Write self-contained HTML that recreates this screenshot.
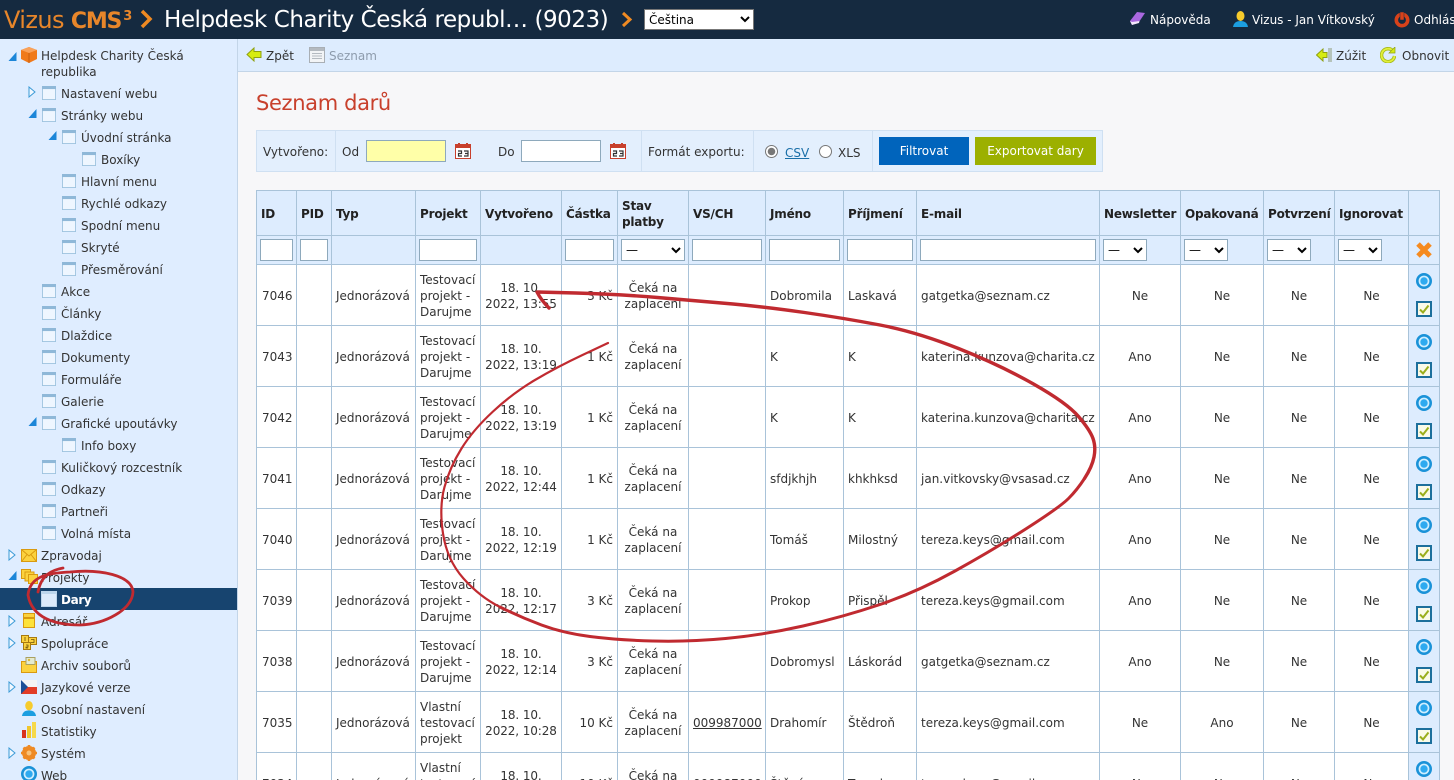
<!DOCTYPE html>
<html lang="cs"><head><meta charset="utf-8"><title>Seznam darů</title>
<style>
html,body{margin:0;padding:0;width:1454px;height:780px;overflow:hidden;background:#f7f7f9;font-family:"DejaVu Sans","Liberation Sans",sans-serif;font-size:12px;letter-spacing:0;color:#333}
*{box-sizing:border-box}
#wrap{position:absolute;left:0;top:0;width:1454px;height:780px;overflow:hidden;background:#f7f7f9}
.a{position:absolute;white-space:nowrap}
#top{position:absolute;left:0;top:0;width:1454px;height:39px;background:#152a40;overflow:hidden}
#side{position:absolute;left:0;top:39px;width:238px;height:741px;background:#dfedff;border-right:1px solid #c3d5e8;overflow:hidden}
#bar{position:absolute;left:238px;top:39px;width:1216px;height:33px;background:#ddecfe;border-bottom:1px solid #c3d5e8}
.t{position:absolute;white-space:nowrap;line-height:16px;height:16px}
svg.i{position:absolute;display:block}
#flt{position:absolute;left:256px;top:130px;width:847px;height:42px;background:#e3effd;border:1px solid #cfe0f2}
.sep{position:absolute;top:130px;width:1px;height:42px;background:#cfe0f2}
input.x{position:absolute;background:#fff;border:1px solid #8ea9bc;height:22px;padding:0;margin:0}
table{position:absolute;left:256px;top:190px;width:1183px;table-layout:fixed;border-collapse:collapse;background:#fff}
td,th{border:1px solid #a9c3d9;padding:0 4px;line-height:16px;font-size:12px;overflow:hidden;white-space:nowrap;vertical-align:middle}
th{background:#ddecfe;text-align:left;font-weight:bold;letter-spacing:-.2px;color:#222;height:45px;white-space:normal;padding-top:2px}
tr.f td{background:#ddecfe;height:29px;padding:0 3px}
tr.f input{display:block;width:100%;height:22px;border:1px solid #8ea9bc;background:#fff;padding:0;margin:0}
tr.f select{display:block;height:22px;border:1px solid #8ea9bc;background:#fff;font:12px "DejaVu Sans",sans-serif;margin:0;padding:0;width:100%}
tr.r td{height:61px;padding-top:2px}
tr.r td:first-child{padding-left:5px}
.c{text-align:center}.rr{text-align:right}
.w{white-space:normal}
td.n{white-space:nowrap;text-align:center;padding-left:0;padding-right:0;letter-spacing:-.1px}
tr.r td.n{padding-left:0;padding-right:0}
td.act{background:#ddecfe;padding:0;position:relative}
tr.r td.act{padding:0;background:#ddecfe}
td.act svg{display:block;margin:0 auto}
</style></head><body>
<svg width="0" height="0" style="position:absolute">
<defs>
<symbol id="pg" viewBox="0 0 16 16"><rect x=".5" y=".5" width="15" height="15" fill="#eef6ff" stroke="#9cc2de"/><rect x="0" y="0" width="16" height="3.500" fill="#8fb8d8"/></symbol>
<symbol id="op" viewBox="0 0 8 10"><path d="M8 0V9H0Z" fill="#1c86d8"/></symbol>
<symbol id="cl" viewBox="0 0 8 12"><path d="M1 1L7 6L1 11Z" fill="#f2f8ff" stroke="#3b9ad6"/></symbol>
<symbol id="cal" viewBox="0 0 16 16"><rect x=".5" y="1.500" width="15" height="14" fill="#fff" stroke="#c8402c"/><rect x="0" y="1" width="16" height="4" fill="#c8402c"/><rect x="3" y="0" width="2" height="3" fill="#c8402c"/><rect x="11" y="0" width="2" height="3" fill="#c8402c"/><path d="M3 8h3.500v2.500h-3v2.500h3.500M9 8h4v2.500h-3M13 10.500v2.500h-4" fill="none" stroke="#333" stroke-width="1.200"/></symbol>
<symbol id="web" viewBox="0 0 16 16"><circle cx="8" cy="8" r="6.700" fill="#cfeeff" stroke="#1a92d8" stroke-width="2.600"/><circle cx="8" cy="8" r="3.700" fill="#2eaaf0"/></symbol>
<symbol id="chk" viewBox="0 0 16 16"><rect x="1" y="1" width="14" height="14" fill="#fafae8" stroke="#1c6f9c" stroke-width="2"/><path d="M4 8.500L7 11.500L12.500 4.500" fill="none" stroke="#9aae1c" stroke-width="2"/></symbol>
</defs></svg>
<div id="wrap">
<div id="top">
<div class="a" style="left:4px;top:5px;font-size:24px;line-height:30px;color:#e8862a;letter-spacing:-.6px">Vizus <b style="font-size:22px;letter-spacing:-1.200px">CMS<sup style="font-size:13px;line-height:0;vertical-align:8px;letter-spacing:0;margin-left:2px">3</sup></b></div>
<svg class="i" style="left:139px;top:9px" width="14" height="20" viewBox="0 0 14 20"><path d="M3 2L11 10L3 18" fill="none" stroke="#ef8a22" stroke-width="3.500"/></svg>
<div class="a" style="left:164px;top:5px;font-size:23px;line-height:30px;color:#fff;letter-spacing:-.45px">Helpdesk Charity Česká republ… (9023)</div>
<svg class="i" style="left:620px;top:11px" width="13" height="17" viewBox="0 0 13 17"><path d="M3 2L10 8.500L3 15" fill="none" stroke="#ef8a22" stroke-width="3"/></svg>
<select style="position:absolute;left:644px;top:9px;width:110px;height:21px;font:12px 'DejaVu Sans',sans-serif;background:#fff;border:1px solid #777;padding:0"><option>Čeština</option></select>
<svg class="i" style="left:1129px;top:11px" width="17" height="16" viewBox="0 0 17 16"><path d="M1 10L8 1L16 2L10 11L3 14Z" fill="#a968e0"/><path d="M1 10L3 14L10 12L10.500 10L3 11Z" fill="#f3e8fb"/></svg>
<div class="t" style="left:1150px;top:12px;color:#fff">Nápověda</div>
<svg class="i" style="left:1232px;top:10px" width="17" height="18" viewBox="0 0 17 18"><ellipse cx="8.500" cy="6" rx="4" ry="5" fill="#f6cb2c"/><path d="M1 17Q2 11 8.500 11Q15 11 16 17Z" fill="#1c9ee0"/></svg>
<div class="t" style="left:1252px;top:12px;color:#fff">Vizus - Jan Vítkovský</div>
<svg class="i" style="left:1394px;top:11px" width="16" height="17" viewBox="0 0 16 17"><circle cx="8" cy="9" r="5.700" fill="none" stroke="#d8421a" stroke-width="3.600"/><rect x="6" y="1" width="4" height="8" fill="#d8421a" stroke="#152a40" stroke-width=".5"/></svg>
<div class="t" style="left:1414px;top:12px;color:#fff">Odhlásit</div>
</div>

<div id="side">
<svg class="i" style="left:8px;top:13px" width="9" height="10"><use href="#op"/></svg>
<svg class="i" style="left:21px;top:8px" width="16" height="16" viewBox="0 0 16 16"><path d="M8 0L16 3V12L8 16L0 12V3Z" fill="#f07a1a"/><path d="M0 3L8 6L16 3L8 0Z" fill="#f9a25a"/><path d="M8 6V16" stroke="#c95f0e"/></svg>
<div class="t" style="left:41px;top:9px">Helpdesk Charity Česká</div>
<div class="t" style="left:41px;top:25px">republika</div>

<svg class="i" style="left:28px;top:47px" width="8" height="12"><use href="#cl"/></svg><svg class="i" style="left:42px;top:47px" width="14" height="14"><use href="#pg"/></svg><div class="t" style="left:61px;top:47px">Nastavení webu</div>
<svg class="i" style="left:28px;top:70px" width="9" height="10"><use href="#op"/></svg><svg class="i" style="left:42px;top:69px" width="14" height="14"><use href="#pg"/></svg><div class="t" style="left:61px;top:69px">Stránky webu</div>
<svg class="i" style="left:48px;top:92px" width="9" height="10"><use href="#op"/></svg><svg class="i" style="left:62px;top:91px" width="14" height="14"><use href="#pg"/></svg><div class="t" style="left:81px;top:91px">Úvodní stránka</div>
<svg class="i" style="left:82px;top:113px" width="14" height="14"><use href="#pg"/></svg><div class="t" style="left:101px;top:113px">Boxíky</div>
<svg class="i" style="left:62px;top:135px" width="14" height="14"><use href="#pg"/></svg><div class="t" style="left:81px;top:135px">Hlavní menu</div>
<svg class="i" style="left:62px;top:157px" width="14" height="14"><use href="#pg"/></svg><div class="t" style="left:81px;top:157px">Rychlé odkazy</div>
<svg class="i" style="left:62px;top:179px" width="14" height="14"><use href="#pg"/></svg><div class="t" style="left:81px;top:179px">Spodní menu</div>
<svg class="i" style="left:62px;top:201px" width="14" height="14"><use href="#pg"/></svg><div class="t" style="left:81px;top:201px">Skryté</div>
<svg class="i" style="left:62px;top:223px" width="14" height="14"><use href="#pg"/></svg><div class="t" style="left:81px;top:223px">Přesměrování</div>
<svg class="i" style="left:42px;top:245px" width="14" height="14"><use href="#pg"/></svg><div class="t" style="left:61px;top:245px">Akce</div>
<svg class="i" style="left:42px;top:267px" width="14" height="14"><use href="#pg"/></svg><div class="t" style="left:61px;top:267px">Články</div>
<svg class="i" style="left:42px;top:289px" width="14" height="14"><use href="#pg"/></svg><div class="t" style="left:61px;top:289px">Dlaždice</div>
<svg class="i" style="left:42px;top:311px" width="14" height="14"><use href="#pg"/></svg><div class="t" style="left:61px;top:311px">Dokumenty</div>
<svg class="i" style="left:42px;top:333px" width="14" height="14"><use href="#pg"/></svg><div class="t" style="left:61px;top:333px">Formuláře</div>
<svg class="i" style="left:42px;top:355px" width="14" height="14"><use href="#pg"/></svg><div class="t" style="left:61px;top:355px">Galerie</div>
<svg class="i" style="left:28px;top:378px" width="9" height="10"><use href="#op"/></svg><svg class="i" style="left:42px;top:377px" width="14" height="14"><use href="#pg"/></svg><div class="t" style="left:61px;top:377px">Grafické upoutávky</div>
<svg class="i" style="left:62px;top:399px" width="14" height="14"><use href="#pg"/></svg><div class="t" style="left:81px;top:399px">Info boxy</div>
<svg class="i" style="left:42px;top:421px" width="14" height="14"><use href="#pg"/></svg><div class="t" style="left:61px;top:421px">Kuličkový rozcestník</div>
<svg class="i" style="left:42px;top:443px" width="14" height="14"><use href="#pg"/></svg><div class="t" style="left:61px;top:443px">Odkazy</div>
<svg class="i" style="left:42px;top:465px" width="14" height="14"><use href="#pg"/></svg><div class="t" style="left:61px;top:465px">Partneři</div>
<svg class="i" style="left:42px;top:487px" width="14" height="14"><use href="#pg"/></svg><div class="t" style="left:61px;top:487px">Volná místa</div>

<svg class="i" style="left:8px;top:510px" width="8" height="12"><use href="#cl"/></svg>
<svg class="i" style="left:21px;top:510px" width="16" height="13" viewBox="0 0 16 13"><rect x=".5" y=".5" width="15" height="12" fill="#fbd23e" stroke="#d99a10"/><path d="M1 1L8 7L15 1M1 12L6 5.500M15 12L10 5.500" fill="none" stroke="#d99a10"/></svg>
<div class="t" style="left:41px;top:509px">Zpravodaj</div>
<svg class="i" style="left:8px;top:532px" width="9" height="10"><use href="#op"/></svg>
<svg class="i" style="left:21px;top:530px" width="17" height="15" viewBox="0 0 17 15"><rect x=".5" y=".5" width="9" height="9" fill="#fbd23e" stroke="#d99a10"/><rect x="4" y="3" width="9" height="9" fill="#fbd23e" stroke="#d99a10"/><rect x="7.500" y="5.500" width="9" height="9" fill="#fbd23e" stroke="#d99a10"/></svg>
<div class="t" style="left:41px;top:531px">Projekty</div>
<div style="position:absolute;left:0;top:549px;width:237px;height:22px;background:#17446f"></div>
<svg class="i" style="left:41px;top:552px" width="16" height="16" viewBox="0 0 16 16"><rect x=".5" y=".5" width="15" height="15" fill="#dcebfb" stroke="#bcd6ec"/><rect x="0" y="0" width="16" height="3" fill="#bcd6ec"/></svg>
<div class="t" style="left:61px;top:553px;color:#fff;font-weight:bold;letter-spacing:-.35px">Dary</div>
<svg class="i" style="left:8px;top:576px" width="8" height="12"><use href="#cl"/></svg>
<svg class="i" style="left:23px;top:574px" width="12" height="15" viewBox="0 0 12 15"><rect x=".5" y=".5" width="11" height="4" fill="#fbd23e" stroke="#d99a10"/><rect x=".5" y="5.500" width="11" height="9" fill="#fde23a" stroke="#d99a10"/></svg>
<div class="t" style="left:41px;top:575px">Adresář</div>
<svg class="i" style="left:8px;top:598px" width="8" height="12"><use href="#cl"/></svg>
<svg class="i" style="left:21px;top:596px" width="16" height="15" viewBox="0 0 16 15"><rect x=".5" y=".5" width="7" height="7" fill="#fbd23e" stroke="#a87a10"/><rect x="7.500" y="2.500" width="8" height="7" fill="#fbd23e" stroke="#a87a10"/><rect x="2.500" y="7.500" width="7" height="7" fill="#fbd23e" stroke="#a87a10"/><path d="M4 2V6M10 4.500H13V7.500H10M5 10H7V12H5V13H7" fill="none" stroke="#6b5208" stroke-width=".8"/></svg>
<div class="t" style="left:41px;top:597px">Spolupráce</div>
<svg class="i" style="left:21px;top:618px" width="16" height="16" viewBox="0 0 16 16"><rect x=".5" y="4.500" width="15" height="11" fill="#fbd23e" stroke="#d99a10"/><rect x="5" y="0.500" width="9" height="7" fill="#e4ead0" stroke="#a9a060"/><circle cx="8" cy="3" r="1.200" fill="#d9b93c"/></svg>
<div class="t" style="left:41px;top:619px">Archiv souborů</div>
<svg class="i" style="left:8px;top:642px" width="8" height="12"><use href="#cl"/></svg>
<svg class="i" style="left:21px;top:641px" width="16" height="14" viewBox="0 0 16 14"><rect width="16" height="7" fill="#f4f4f4"/><rect y="7" width="16" height="7" fill="#e23c26"/><path d="M0 0L7 7L0 14Z" fill="#1d4f96"/></svg>
<div class="t" style="left:41px;top:641px">Jazykové verze</div>
<svg class="i" style="left:21px;top:661px" width="16" height="17" viewBox="0 0 17 18"><ellipse cx="8.500" cy="6" rx="4" ry="5" fill="#f6cb2c"/><path d="M1 17Q2 11 8.500 11Q15 11 16 17Z" fill="#1c9ee0"/></svg>
<div class="t" style="left:41px;top:663px">Osobní nastavení</div>
<svg class="i" style="left:22px;top:683px" width="14" height="16" viewBox="0 0 14 16"><rect x="0" y="8" width="4" height="8" fill="#d8321e"/><rect x="5" y="4" width="4" height="12" fill="#f0c62c"/><rect x="10" y="0" width="4" height="16" fill="#f6d94a"/></svg>
<div class="t" style="left:41px;top:685px">Statistiky</div>
<svg class="i" style="left:8px;top:708px" width="8" height="12"><use href="#cl"/></svg>
<svg class="i" style="left:21px;top:706px" width="16" height="16" viewBox="0 0 16 16"><circle cx="8" cy="8" r="5" fill="none" stroke="#ee8a24" stroke-width="4"/><path d="M8 0V16M0 8H16M2.500 2.500L13.500 13.500M13.500 2.500L2.500 13.500" stroke="#ee8a24" stroke-width="2.500"/><circle cx="8" cy="8" r="2.500" fill="#f8c27a"/></svg>
<div class="t" style="left:41px;top:707px">Systém</div>
<svg class="i" style="left:21px;top:727px" width="16" height="16"><use href="#web"/></svg>
<div class="t" style="left:41px;top:729px">Web</div>
</div>

<div id="bar">
<svg class="i" style="left:8px;top:8px" width="16" height="15" viewBox="0 0 16 15"><path d="M1 7.500L8 1V4.500H15V10.500H8V14Z" fill="#d6ec10" stroke="#8ea010"/></svg>
<div class="t" style="left:28px;top:9px">Zpět</div>
<svg class="i" style="left:71px;top:8px" width="16" height="16" viewBox="0 0 16 16"><rect x=".5" y=".5" width="15" height="15" fill="#f2f4f6" stroke="#a9afb5"/><rect x="1" y="1" width="14" height="3" fill="#b4bac0"/><path d="M3 6.500H13M3 9H13M3 11.500H13" stroke="#b4bac0"/></svg>
<div class="t" style="left:91px;top:9px;color:#8e9cad">Seznam</div>
<svg class="i" style="left:1078px;top:8px" width="16" height="16" viewBox="0 0 16 16"><path d="M0.500 8L7 2V5.500H11V10.500H7V14Z" fill="#d6ec10" stroke="#8ea010"/><path d="M13 1V15M15 1V15" stroke="#8d9a76"/></svg>
<div class="t" style="left:1098px;top:9px">Zúžit</div>
<svg class="i" style="left:1142px;top:8px" width="16" height="16" viewBox="0 0 16 16"><path d="M13 4A6.500 6.500 0 1 0 14.500 9" fill="none" stroke="#a4b81a" stroke-width="3.500"/><path d="M13 4A6.500 6.500 0 1 0 14.500 9" fill="none" stroke="#e2f03a" stroke-width="1.800"/><path d="M9 6H15V0Z" fill="#d6ec10" stroke="#8ea010" stroke-width=".7"/></svg>
<div class="t" style="left:1164px;top:9px">Obnovit</div>
</div>

<div class="a" style="left:256px;top:89px;font-size:21px;line-height:28px;color:#c8402c;letter-spacing:-.35px">Seznam darů</div>

<div id="flt"></div>
<div class="sep" style="left:335px"></div><div class="sep" style="left:641px"></div><div class="sep" style="left:753px"></div><div class="sep" style="left:872px"></div>
<div class="t" style="left:263px;top:144px">Vytvořeno:</div>
<div class="t" style="left:342px;top:144px">Od</div>
<input class="x" style="left:366px;top:140px;width:80px;background:#ffffa8">
<svg class="i" style="left:455px;top:143px" width="16" height="16"><use href="#cal"/></svg>
<div class="t" style="left:498px;top:144px">Do</div>
<input class="x" style="left:521px;top:140px;width:80px">
<svg class="i" style="left:610px;top:143px" width="16" height="16"><use href="#cal"/></svg>
<div class="t" style="left:648px;top:144px">Formát exportu:</div>
<svg class="i" style="left:765px;top:145px" width="13" height="13" viewBox="0 0 13 13"><circle cx="6.500" cy="6.500" r="6" fill="#fff" stroke="#777"/><circle cx="6.500" cy="6.500" r="3.800" fill="#777"/></svg>
<div class="t" style="left:785px;top:145px;color:#1a6fa8;text-decoration:underline">CSV</div>
<svg class="i" style="left:819px;top:145px" width="13" height="13" viewBox="0 0 13 13"><circle cx="6.500" cy="6.500" r="6" fill="#fff" stroke="#777"/></svg>
<div class="t" style="left:838px;top:145px">XLS</div>
<div class="a" style="left:879px;top:137px;width:90px;height:28px;background:#0064bc;color:#fff;text-align:center;line-height:29px">Filtrovat</div>
<div class="a" style="left:975px;top:137px;width:121px;height:28px;background:#9cb000;color:#fff;text-align:center;line-height:29px">Exportovat dary</div>

<table>
<colgroup><col style="width:40px"><col style="width:35px"><col style="width:84px"><col style="width:65px"><col style="width:81px"><col style="width:56px"><col style="width:71px"><col style="width:77px"><col style="width:78px"><col style="width:73px"><col style="width:183px"><col style="width:81px"><col style="width:83px"><col style="width:71px"><col style="width:74px"><col style="width:31px"></colgroup>
<tr><th>ID</th><th>PID</th><th>Typ</th><th>Projekt</th><th>Vytvořeno</th><th>Částka</th><th>Stav platby</th><th>VS/CH</th><th>Jméno</th><th>Příjmení</th><th>E-mail</th><th>Newsletter</th><th>Opakovaná</th><th>Potvrzení</th><th>Ignorovat</th><th></th></tr>
<tr class="f"><td><input></td><td><input></td><td></td><td><input></td><td></td><td><input></td><td><select><option>—</option></select></td><td><input></td><td><input></td><td><input></td><td><input></td><td><select style="width:44px"><option>—</option></select></td><td><select style="width:44px"><option>—</option></select></td><td><select style="width:44px"><option>—</option></select></td><td><select style="width:44px"><option>—</option></select></td><td class="act"><svg width="18" height="18" viewBox="0 0 18 18"><path d="M3 3L15 15M15 3L3 15" fill="none" stroke="#f58a1f" stroke-width="5"/></svg></td></tr>
<tr class="r"><td>7046</td><td></td><td>Jednorázová</td><td class="w">Testovací projekt - Darujme</td><td class="n">18. 10.<br>2022, 13:55</td><td class="rr">3 Kč</td><td class="c w">Čeká na zaplacení</td><td></td><td>Dobromila</td><td>Laskavá</td><td>gatgetka@seznam.cz</td><td class="c">Ne</td><td class="c">Ne</td><td class="c">Ne</td><td class="c">Ne</td><td class="act"><svg width="16" height="16" style="margin-bottom:12px"><use href="#web"/></svg><svg width="16" height="16"><use href="#chk"/></svg></td></tr>
<tr class="r"><td>7043</td><td></td><td>Jednorázová</td><td class="w">Testovací projekt - Darujme</td><td class="n">18. 10.<br>2022, 13:19</td><td class="rr">1 Kč</td><td class="c w">Čeká na zaplacení</td><td></td><td>K</td><td>K</td><td>katerina.kunzova@charita.cz</td><td class="c">Ano</td><td class="c">Ne</td><td class="c">Ne</td><td class="c">Ne</td><td class="act"><svg width="16" height="16" style="margin-bottom:12px"><use href="#web"/></svg><svg width="16" height="16"><use href="#chk"/></svg></td></tr>
<tr class="r"><td>7042</td><td></td><td>Jednorázová</td><td class="w">Testovací projekt - Darujme</td><td class="n">18. 10.<br>2022, 13:19</td><td class="rr">1 Kč</td><td class="c w">Čeká na zaplacení</td><td></td><td>K</td><td>K</td><td>katerina.kunzova@charita.cz</td><td class="c">Ano</td><td class="c">Ne</td><td class="c">Ne</td><td class="c">Ne</td><td class="act"><svg width="16" height="16" style="margin-bottom:12px"><use href="#web"/></svg><svg width="16" height="16"><use href="#chk"/></svg></td></tr>
<tr class="r"><td>7041</td><td></td><td>Jednorázová</td><td class="w">Testovací projekt - Darujme</td><td class="n">18. 10.<br>2022, 12:44</td><td class="rr">1 Kč</td><td class="c w">Čeká na zaplacení</td><td></td><td>sfdjkhjh</td><td>khkhksd</td><td>jan.vitkovsky@vsasad.cz</td><td class="c">Ano</td><td class="c">Ne</td><td class="c">Ne</td><td class="c">Ne</td><td class="act"><svg width="16" height="16" style="margin-bottom:12px"><use href="#web"/></svg><svg width="16" height="16"><use href="#chk"/></svg></td></tr>
<tr class="r"><td>7040</td><td></td><td>Jednorázová</td><td class="w">Testovací projekt - Darujme</td><td class="n">18. 10.<br>2022, 12:19</td><td class="rr">1 Kč</td><td class="c w">Čeká na zaplacení</td><td></td><td>Tomáš</td><td>Milostný</td><td>tereza.keys@gmail.com</td><td class="c">Ano</td><td class="c">Ne</td><td class="c">Ne</td><td class="c">Ne</td><td class="act"><svg width="16" height="16" style="margin-bottom:12px"><use href="#web"/></svg><svg width="16" height="16"><use href="#chk"/></svg></td></tr>
<tr class="r"><td>7039</td><td></td><td>Jednorázová</td><td class="w">Testovací projekt - Darujme</td><td class="n">18. 10.<br>2022, 12:17</td><td class="rr">3 Kč</td><td class="c w">Čeká na zaplacení</td><td></td><td>Prokop</td><td>Přispěl</td><td>tereza.keys@gmail.com</td><td class="c">Ano</td><td class="c">Ne</td><td class="c">Ne</td><td class="c">Ne</td><td class="act"><svg width="16" height="16" style="margin-bottom:12px"><use href="#web"/></svg><svg width="16" height="16"><use href="#chk"/></svg></td></tr>
<tr class="r"><td>7038</td><td></td><td>Jednorázová</td><td class="w">Testovací projekt - Darujme</td><td class="n">18. 10.<br>2022, 12:14</td><td class="rr">3 Kč</td><td class="c w">Čeká na zaplacení</td><td></td><td>Dobromysl</td><td>Láskorád</td><td>gatgetka@seznam.cz</td><td class="c">Ano</td><td class="c">Ne</td><td class="c">Ne</td><td class="c">Ne</td><td class="act"><svg width="16" height="16" style="margin-bottom:12px"><use href="#web"/></svg><svg width="16" height="16"><use href="#chk"/></svg></td></tr>
<tr class="r"><td>7035</td><td></td><td>Jednorázová</td><td class="w">Vlastní testovací projekt</td><td class="n">18. 10.<br>2022, 10:28</td><td class="rr">10 Kč</td><td class="c w">Čeká na zaplacení</td><td><u>009987000</u></td><td>Drahomír</td><td>Štědroň</td><td>tereza.keys@gmail.com</td><td class="c">Ne</td><td class="c">Ano</td><td class="c">Ne</td><td class="c">Ne</td><td class="act"><svg width="16" height="16" style="margin-bottom:12px"><use href="#web"/></svg><svg width="16" height="16"><use href="#chk"/></svg></td></tr>
<tr class="r"><td>7034</td><td></td><td>Jednorázová</td><td class="w">Vlastní testovací projekt</td><td class="n">18. 10.<br>2022, 10:21</td><td class="rr">10 Kč</td><td class="c w">Čeká na zaplacení</td><td><u>009987000</u></td><td>Štěpán</td><td>Tomek</td><td>tereza.keys@gmail.com</td><td class="c">Ne</td><td class="c">Ne</td><td class="c">Ne</td><td class="c">Ne</td><td class="act"><svg width="16" height="16" style="margin-bottom:12px"><use href="#web"/></svg><svg width="16" height="16"><use href="#chk"/></svg></td></tr>
</table>

<svg class="i" style="left:0;top:0;pointer-events:none" width="1454" height="780" viewBox="0 0 1454 780">
<g fill="none" stroke="#c02a30" stroke-linecap="round" stroke-linejoin="round">
<path stroke-width="3.400" d="M549 308Q541 300 537 292L576 293Q615 294 657.500 297.500Q700 301 733 304Q766 307 804.500 312.500Q843 318 880 325Q917 332 958.500 348.500Q1000 365 1033.500 384Q1067 403 1078.500 416.500Q1090 430 1093 438.500Q1096 447 1094 457Q1092 467 1084.500 478.500"/>
<path stroke-width="3" d="M1084.500 478.500Q1077 490 1068.500 498.500Q1060 507 1026.500 528.500Q993 550 955 571Q917 592 880 604.500Q843 617 803 626Q763 635 725.500 638.500Q688 642 652.500 641Q617 640 590 636.500Q563 633 541.500 625Q520 617 500 607"/>
<path stroke-width="2.200" d="M500 607Q480 597 463.500 578.500Q447 560 443 533.500Q439 507 444.500 487Q450 467 461.500 448.500Q473 430 493 411.500Q513 393 535 380Q557 367 582.500 355L608 343"/>
<path stroke-width="2.800" d="M63 568C52 570 41 575 38 592"/>
<path stroke-width="2.800" d="M28 595C30 575 50 573 70 572C100 569 132 575 133 592C132 610 105 624 80 625C55 625 32 618 28 595"/>
</g>
</svg>
</div>
</body></html>
